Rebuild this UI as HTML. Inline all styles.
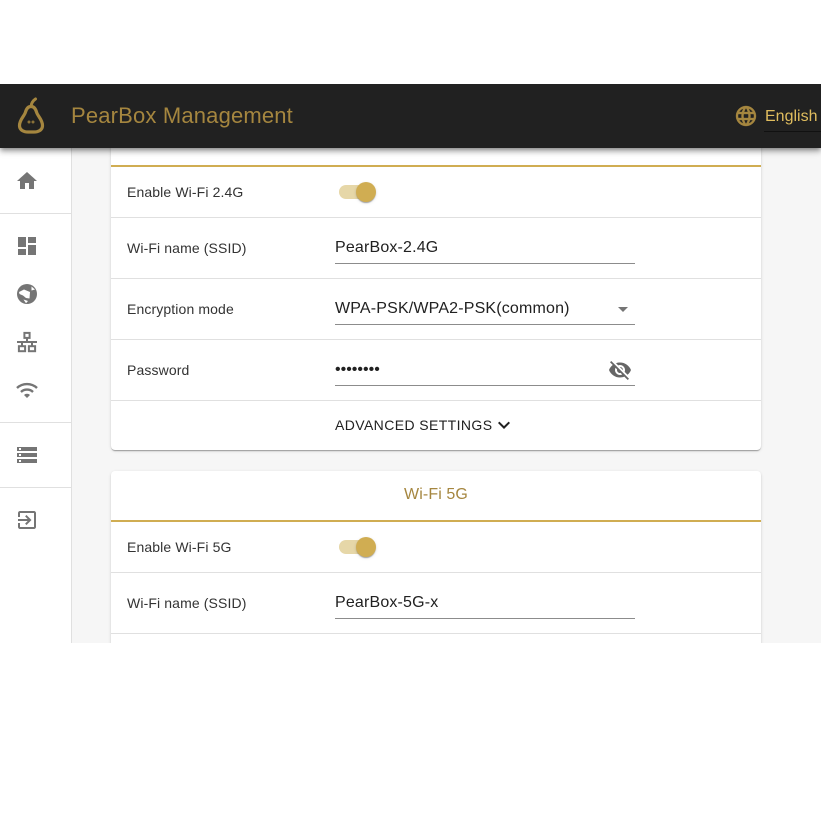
<!DOCTYPE html>
<html>
<head>
<meta charset="utf-8">
<style>
html,body{margin:0;padding:0;background:#fff;width:821px;height:821px;overflow:hidden;font-family:"Liberation Sans",sans-serif;}
#app{position:absolute;left:0;top:84px;width:821px;height:559px;overflow:hidden;background:#f6f6f6;}
#hdr{position:absolute;left:0;top:0;width:821px;height:64px;background:#212121;box-shadow:0 2px 4px -1px rgba(0,0,0,.3),0 4px 5px 0 rgba(0,0,0,.2),0 1px 10px 0 rgba(0,0,0,.15);z-index:5;}
#title{position:absolute;left:71px;top:19px;font-size:22px;line-height:26px;color:#a5863f;white-space:nowrap;letter-spacing:.17px;}
#lang{position:absolute;left:765px;top:22px;font-size:16px;line-height:20px;color:#e0bd5e;white-space:nowrap;padding-top:1px;}
#langline{position:absolute;left:764px;top:47px;width:57px;height:1px;background:#111;}
#side{position:absolute;left:0;top:64px;width:71px;height:495px;background:#fff;border-right:1px solid #e0e0e0;}
.sd{position:absolute;left:0;width:71px;height:1px;background:#e0e0e0;}
svg{position:absolute;display:block;}
.ic{fill:#757575;}
.card{position:absolute;left:111px;width:650px;background:#fff;border-radius:4px;box-shadow:0 2px 1px -1px rgba(0,0,0,.2),0 1px 1px 0 rgba(0,0,0,.14),0 1px 3px 0 rgba(0,0,0,.12);}
.gold{position:absolute;left:0;width:650px;height:2px;background:#d0ad52;}
.div{position:absolute;left:0;width:650px;height:1px;background:#e0e0e0;}
.lab{position:absolute;left:16px;font-size:14px;line-height:18px;color:#333;white-space:nowrap;letter-spacing:.12px;}
.val{position:absolute;left:224px;font-size:16px;line-height:20px;color:#212121;white-space:nowrap;letter-spacing:.17px;}
.ul{position:absolute;left:224px;width:300px;height:1px;background:#8c8c8c;}
.track{position:absolute;left:228px;width:34px;height:14px;border-radius:7px;background:#e6d7a8;}
.thumb{position:absolute;left:245px;width:20px;height:20px;border-radius:50%;background:#d0ad52;box-shadow:0 2px 1px -1px rgba(0,0,0,.2),0 1px 1px 0 rgba(0,0,0,.14),0 1px 3px 0 rgba(0,0,0,.12);}
</style>
</head>
<body>
<div id="app">
  <div id="side">
    <svg class="ic" style="left:15px;top:21px" width="24" height="24" viewBox="0 0 24 24"><path d="M10 20v-6h4v6h5v-8h3L12 3 2 12h3v8z"/></svg>
    <div class="sd" style="top:65px"></div>
    <svg class="ic" style="left:15px;top:86px" width="24" height="24" viewBox="0 0 24 24"><path d="M3 13h8V3H3v10zm0 8h8v-6H3v6zm10 0h8V11h-8v10zm0-18v6h8V3h-8z"/></svg>
    <svg style="left:15px;top:134px" width="24" height="24" viewBox="0 0 24 24"><circle cx="12" cy="12" r="10" fill="#757575"/><path fill="#fff" d="M4 10l5-2.5 6 2.5-.5 6.5-3.5-.5-3-2.5-3.5-1.5zM8.5 17.5l4.5 1.5-2 2.2zM16.5 4.5L20 7.5 16.5 8.5z"/></svg>
    <svg style="left:15px;top:182px" width="24" height="24" viewBox="0 0 24 24" fill="none" stroke="#757575" stroke-width="2"><rect x="9.4" y="2.9" width="5.2" height="5"/><path d="M12 8v4M2 12h20M7 12v4M17 12v4"/><rect x="3.9" y="16.2" width="6.2" height="5"/><rect x="13.9" y="16.2" width="6.2" height="5"/></svg>
    <svg style="left:15px;top:230px" width="24" height="24" viewBox="0 0 24 24"><path fill="none" stroke="#757575" stroke-width="2.4" d="M2 10C7.5 4.7 16.5 4.7 22 10M6 14c3.3-3.2 8.7-3.2 12 0"/><path fill="#757575" d="M9 17l3 3 3-3c-1.65-1.66-4.34-1.66-6 0z"/></svg>
    <div class="sd" style="top:274px"></div>
    <svg class="ic" style="left:15px;top:295px" width="24" height="24" viewBox="0 0 24 24"><path d="M2 20h20v-4H2v4zm2-3h2v2H4v-2zM2 4v4h20V4H2zm4 3H4V5h2v2zm-4 7h20v-4H2v4zm2-3h2v2H4v-2z"/></svg>
    <div class="sd" style="top:339px"></div>
    <svg class="ic" style="left:15px;top:360px" width="24" height="24" viewBox="0 0 24 24"><path d="M10.09 15.59L11.5 17l5-5-5-5-1.41 1.41L12.67 11H3v2h9.67l-2.58 2.59zM19 3H5c-1.11 0-2 .9-2 2v4h2V5h14v14H5v-4H3v4c0 1.1.89 2 2 2h14c1.1 0 2-.9 2-2V5c0-1.1-.9-2-2-2z"/></svg>
  </div>

  <div class="card" style="top:-40px;height:406px">
    <div class="gold" style="top:121px"></div>
    <div class="lab" style="top:139px">Enable Wi-Fi 2.4G</div>
    <div class="track" style="top:141px"></div>
    <div class="thumb" style="top:138px"></div>
    <div class="div" style="top:173px"></div>
    <div class="lab" style="top:195px">Wi-Fi name (SSID)</div>
    <div class="val" style="top:194px">PearBox-2.4G</div>
    <div class="ul" style="top:219px"></div>
    <div class="div" style="top:234px"></div>
    <div class="lab" style="top:256px">Encryption mode</div>
    <div class="val" style="top:255px">WPA-PSK/WPA2-PSK(common)</div>
    <svg style="left:500px;top:253px" width="24" height="24" viewBox="0 0 24 24" fill="#757575"><path d="M7 10l5 5 5-5z"/></svg>
    <div class="ul" style="top:280px"></div>
    <div class="div" style="top:295px"></div>
    <div class="lab" style="top:317px">Password</div>
    <div class="val" style="top:316px;letter-spacing:0">••••••••</div>
    <svg style="left:497px;top:314px" width="24" height="24" viewBox="0 0 24 24" fill="#666"><path d="M12 7c2.76 0 5 2.24 5 5 0 .65-.13 1.26-.36 1.83l2.92 2.92c1.51-1.26 2.7-2.89 3.43-4.75-1.73-4.39-6-7.5-11-7.5-1.4 0-2.74.25-3.98.7l2.16 2.16C10.74 7.13 11.35 7 12 7zM2 4.27l2.28 2.28.46.46C3.08 8.3 1.78 10.02 1 12c1.73 4.39 6 7.5 11 7.5 1.55 0 3.03-.3 4.38-.84l.42.42L19.73 22 21 20.73 3.27 3 2 4.27zM7.53 9.8l1.55 1.55c-.05.21-.08.43-.08.65 0 1.66 1.34 3 3 3 .22 0 .44-.03.65-.08l1.55 1.55c-.67.33-1.41.53-2.2.53-2.76 0-5-2.24-5-5 0-.79.2-1.53.53-2.2zm4.31-.78l3.15 3.15.02-.16c0-1.66-1.34-3-3-3l-.17.01z"/></svg>
    <div class="ul" style="top:341px"></div>
    <div class="div" style="top:356px"></div>
    <div class="val" style="top:371px;font-size:14px;letter-spacing:.4px;color:#212121">ADVANCED SETTINGS</div>
    <svg style="left:381px;top:369px" width="24" height="24" viewBox="0 0 24 24" fill="#212121"><path d="M16.59 8.59L12 13.17 7.41 8.59 6 10l6 6 6-6z"/></svg>
  </div>

  <div class="card" style="top:387px;height:240px">
    <div style="position:absolute;left:0;top:14px;width:650px;text-align:center;font-size:16px;line-height:20px;color:#a5863f;letter-spacing:.1px">Wi-Fi 5G</div>
    <div class="gold" style="top:49px"></div>
    <div class="lab" style="top:67px">Enable Wi-Fi 5G</div>
    <div class="track" style="top:69px"></div>
    <div class="thumb" style="top:66px"></div>
    <div class="div" style="top:101px"></div>
    <div class="lab" style="top:123px">Wi-Fi name (SSID)</div>
    <div class="val" style="top:122px">PearBox-5G-x</div>
    <div class="ul" style="top:147px"></div>
    <div class="div" style="top:162px"></div>
  </div>

  <div id="hdr">
    <svg style="left:10px;top:8px" width="44" height="48" viewBox="0 0 44 48">
      <path d="M21 14.5C21.3 11.5 22.5 9 25.5 7" fill="none" stroke="#a5863f" stroke-width="3" stroke-linecap="round"/>
      <path d="M21 14.5C18 14.5 16.5 16.5 15.5 20C14.5 24 9.5 27.5 9.5 33.5C9.5 38 13.5 40 18 40H24C28.5 40 32.5 38 32.5 33.5C32.5 27.5 27.5 24 26.5 20C25.5 16.5 24 14.5 21 14.5Z" fill="none" stroke="#a5863f" stroke-width="3.2"/>
      <circle cx="19" cy="30" r="1.5" fill="#a5863f" opacity=".8"/>
      <circle cx="23" cy="30" r="1.5" fill="#a5863f" opacity=".8"/>
    </svg>
    <div id="title">PearBox Management</div>
    <svg style="left:734px;top:20px" width="24" height="24" viewBox="0 0 24 24" fill="#a5863f" stroke="#a5863f" stroke-width=".35"><path d="M11.99 2C6.47 2 2 6.48 2 12s4.47 10 9.99 10C17.52 22 22 17.52 22 12S17.52 2 11.99 2zm6.93 6h-2.95c-.32-1.25-.78-2.45-1.38-3.56 1.84.63 3.37 1.91 4.33 3.56zM12 4.04c.83 1.2 1.48 2.53 1.91 3.96h-3.82c.43-1.43 1.08-2.76 1.91-3.96zM4.26 14C4.1 13.36 4 12.69 4 12s.1-1.36.26-2h3.38c-.08.66-.14 1.32-.14 2 0 .68.06 1.34.14 2H4.26zm.82 2h2.95c.32 1.25.78 2.45 1.38 3.56-1.84-.63-3.37-1.9-4.33-3.56zm2.95-8H5.08c.96-1.66 2.49-2.93 4.33-3.56C8.81 5.55 8.35 6.75 8.03 8zM12 19.96c-.83-1.2-1.48-2.53-1.91-3.96h3.82c-.43 1.43-1.08 2.76-1.91 3.96zM14.34 14H9.66c-.09-.66-.16-1.32-.16-2 0-.68.07-1.35.16-2h4.68c.09.65.16 1.32.16 2 0 .68-.07 1.34-.16 2zm.25 5.56c.6-1.11 1.06-2.31 1.38-3.56h2.95c-.96 1.65-2.49 2.93-4.33 3.56zM16.36 14c.08-.66.14-1.32.14-2 0-.68-.06-1.34-.14-2h3.38c.16.64.26 1.31.26 2s-.1 1.36-.26 2h-3.38z"/></svg>
    <div id="lang">English</div>
    <div id="langline"></div>
  </div>
</div>
</body>
</html>
